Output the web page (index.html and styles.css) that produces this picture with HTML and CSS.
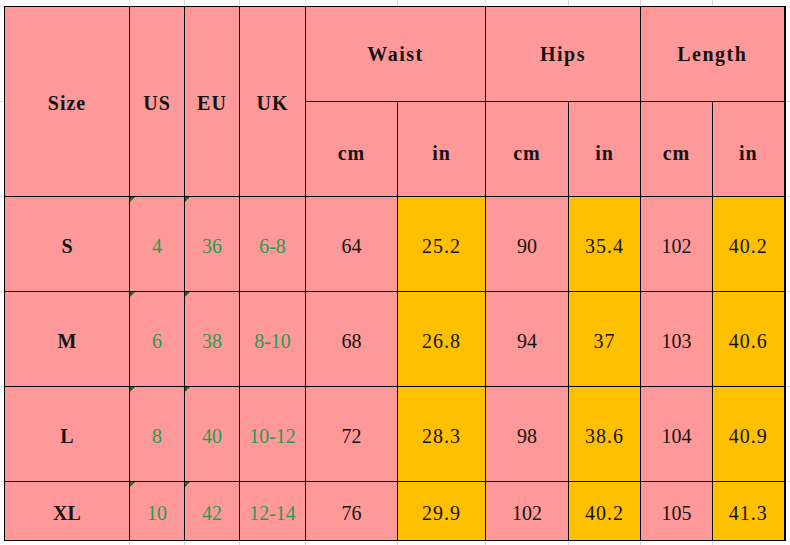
FILE: index.html
```html
<!DOCTYPE html>
<html lang="en">
<head>
<meta charset="utf-8">
<title>Size Chart</title>
<link rel="stylesheet" href="styles.css">
</head>
<body>
<table class="chart">
  <colgroup>
    <col class="c-size"><col class="c-us"><col class="c-eu"><col class="c-uk">
    <col class="c-wcm"><col class="c-win"><col class="c-hcm"><col class="c-hin">
    <col class="c-lcm"><col class="c-lin">
  </colgroup>
  <tr class="row-head">
    <th rowspan="2" class="tall">Size</th>
    <th rowspan="2" class="tall">US</th>
    <th rowspan="2" class="tall">EU</th>
    <th rowspan="2" class="tall">UK</th>
    <th colspan="2" class="group">Waist</th>
    <th colspan="2" class="group">Hips</th>
    <th colspan="2" class="group last">Length</th>
  </tr>
  <tr class="row-head">
    <th class="unit">cm</th><th class="unit">in</th>
    <th class="unit">cm</th><th class="unit">in</th>
    <th class="unit">cm</th><th class="unit last">in</th>
  </tr>
  <tr class="row-data">
    <td class="size">S</td>
    <td class="conv mark">4</td><td class="conv mark">36</td><td class="conv">6-8</td>
    <td>64</td><td class="inch">25.2</td>
    <td>90</td><td class="inch">35.4</td>
    <td>102</td><td class="inch last">40.2</td>
  </tr>
  <tr class="row-data">
    <td class="size">M</td>
    <td class="conv mark">6</td><td class="conv mark">38</td><td class="conv">8-10</td>
    <td>68</td><td class="inch">26.8</td>
    <td>94</td><td class="inch">37</td>
    <td>103</td><td class="inch last">40.6</td>
  </tr>
  <tr class="row-data">
    <td class="size">L</td>
    <td class="conv mark">8</td><td class="conv mark">40</td><td class="conv">10-12</td>
    <td>72</td><td class="inch">28.3</td>
    <td>98</td><td class="inch">38.6</td>
    <td>104</td><td class="inch last">40.9</td>
  </tr>
  <tr class="row-data row-short">
    <td class="size">XL</td>
    <td class="conv mark">10</td><td class="conv mark">42</td><td class="conv">12-14</td>
    <td>76</td><td class="inch">29.9</td>
    <td>102</td><td class="inch">40.2</td>
    <td>105</td><td class="inch last">41.3</td>
  </tr>
</table>
</body>
</html>
```

FILE: styles.css
```css
html, body {
  margin: 0;
  padding: 0;
}

body {
  width: 790px;
  height: 545px;
  overflow: hidden;
  background-color: #ffffff;
  background-repeat: no-repeat;
  background-image:
    linear-gradient(#dadada, #dadada),
    linear-gradient(#dadada, #dadada),
    linear-gradient(#dadada, #dadada),
    linear-gradient(#dadada, #dadada),
    linear-gradient(#dadada, #dadada),
    linear-gradient(#dadada, #dadada),
    linear-gradient(#dadada, #dadada),
    linear-gradient(#dadada, #dadada),
    linear-gradient(#dadada, #dadada),
    linear-gradient(#dadada, #dadada),
    linear-gradient(#dadada, #dadada),
    linear-gradient(#dadada, #dadada),
    linear-gradient(#dadada, #dadada),
    linear-gradient(#dadada, #dadada),
    linear-gradient(#dadada, #dadada);
  background-size:
    1px 100%, 1px 100%, 1px 100%, 1px 100%, 1px 100%,
    1px 100%, 1px 100%, 1px 100%, 1px 100%,
    100% 1px, 100% 1px, 100% 1px, 100% 1px, 100% 1px, 100% 1px;
  background-position:
    129px 0, 184px 0, 239px 0, 305px 0, 397px 0,
    485px 0, 568px 0, 640px 0, 712px 0,
    0 6px, 0 101px, 0 196px, 0 291px, 0 386px, 0 481px;
}

.chart {
  border-collapse: collapse;
  table-layout: fixed;
  width: 781px;
  margin: 6px 0 0 4px;
  font-family: "Liberation Serif", "Times New Roman", serif;
  font-size: 20px;
  line-height: 22px;
  color: #141414;
}

.c-size { width: 125px; }
.c-us   { width: 55px; }
.c-eu   { width: 55px; }
.c-uk   { width: 66px; }
.c-wcm  { width: 92px; }
.c-win  { width: 88px; }
.c-hcm  { width: 83px; }
.c-hin  { width: 72px; }
.c-lcm  { width: 72px; }
.c-lin  { width: 72px; }

.chart th,
.chart td {
  border: 1px solid #000000;
  background: #ff9999;
  text-align: center;
  vertical-align: middle;
  padding: 3px 0 0 0;
  white-space: nowrap;
  overflow: hidden;
}

.chart th {
  font-weight: bold;
  letter-spacing: 1px;
}

.chart th.group {
  letter-spacing: 1.5px;
}

.chart .last {
  border-right-width: 2px;
}

.row-head th { height: 91px; }
.row-head th.group { height: 94px; padding-top: 0; }
.row-head th.unit { height: 86px; padding-top: 8px; }
.row-data td { height: 91px; }
.row-data.row-short td { height: 55px; }

.chart .size {
  font-weight: bold;
}

.chart .conv {
  color: #2c9a4b;
}

.chart .inch {
  background: #ffc000;
  letter-spacing: 1px;
}

.chart .mark {
  position: relative;
}

.chart .mark::before {
  content: "";
  position: absolute;
  top: 0;
  left: 0;
  width: 0;
  height: 0;
  border-top: 5px solid #1e6a1e;
  border-right: 5px solid transparent;
}
```
